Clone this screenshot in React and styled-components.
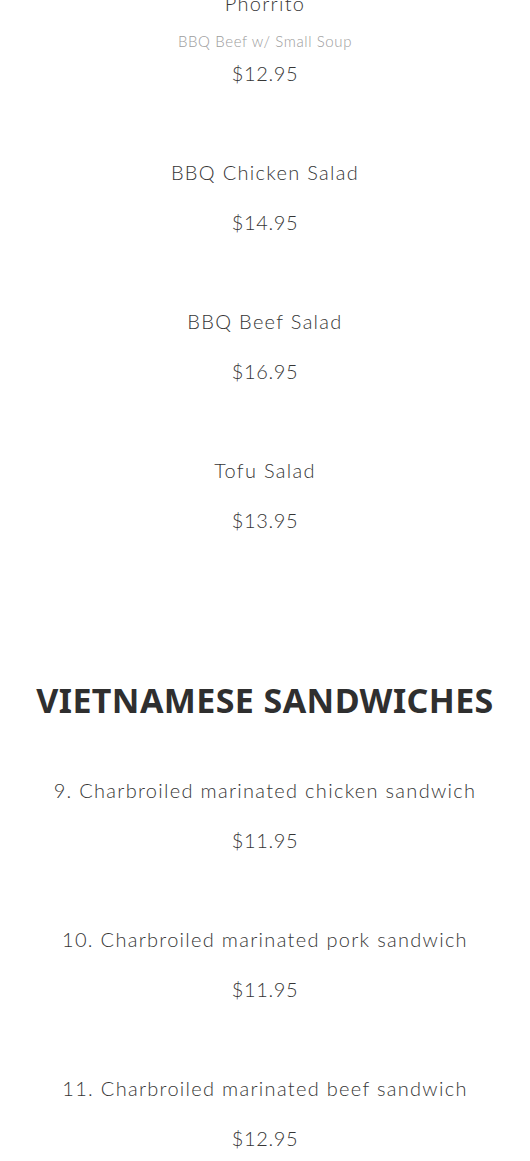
import React from "react";
import styled, { createGlobalStyle } from "styled-components";

const GlobalStyle = createGlobalStyle`
  body {
    margin: 0;
    background: #ffffff;
    font-family: "Lato", "Open Sans", sans-serif;
    color: #444444;
  }
`;

const Page = styled.main`
  display: flex;
  flex-direction: column;
  align-items: center;
  margin-top: -12px;
  padding: 0 20px;
`;

const Section = styled.section`
  display: flex;
  flex-direction: column;
  align-items: center;
  gap: 69px;
  width: 100%;
`;

const SectionTitle = styled.h2`
  margin: 140px 0 50px;
  font-family: "Noto Sans", "DejaVu Sans", sans-serif;
  font-weight: 700;
  font-size: 34px;
  line-height: 50px;
  letter-spacing: 0.4px;
  color: #2f2f2f;
  text-align: center;
  white-space: nowrap;
`;

const Item = styled.article`
  display: flex;
  flex-direction: column;
  align-items: center;
  text-align: center;
`;

const Name = styled.h3`
  margin: 0;
  font-weight: 300;
  font-size: 20px;
  line-height: 30px;
  letter-spacing: 1.3px;
  color: #363636;
  white-space: nowrap;
`;

const Note = styled.p`
  margin: 13px 0 0;
  font-weight: 300;
  font-size: 15px;
  line-height: 20px;
  letter-spacing: 0.6px;
  color: #9c9c9c;
`;

const Price = styled.p`
  margin: ${({ $tight }) => ($tight ? "7px" : "20px")} 0 0;
  font-weight: 300;
  font-size: 20px;
  line-height: 30px;
  letter-spacing: 0.6px;
  color: #363636;
`;

const bowls = [
  { name: "Phorrito", note: "BBQ Beef w/ Small Soup", price: "$12.95" },
  { name: "BBQ Chicken Salad", price: "$14.95" },
  { name: "BBQ Beef Salad", price: "$16.95" },
  { name: "Tofu Salad", price: "$13.95" },
];

const sandwiches = [
  { name: "9. Charbroiled marinated chicken sandwich", price: "$11.95" },
  { name: "10. Charbroiled marinated pork sandwich", price: "$11.95" },
  { name: "11. Charbroiled marinated beef sandwich", price: "$12.95" },
];

const MenuItem = ({ name, note, price }) => (
  <Item>
    <Name>{name}</Name>
    {note && <Note>{note}</Note>}
    <Price $tight={!!note}>{price}</Price>
  </Item>
);

export default function App() {
  return (
    <>
      <GlobalStyle />
      <Page>
        <Section>
          {bowls.map((item) => (
            <MenuItem key={item.name} {...item} />
          ))}
        </Section>
        <SectionTitle>VIETNAMESE SANDWICHES</SectionTitle>
        <Section>
          {sandwiches.map((item) => (
            <MenuItem key={item.name} {...item} />
          ))}
        </Section>
      </Page>
    </>
  );
}
